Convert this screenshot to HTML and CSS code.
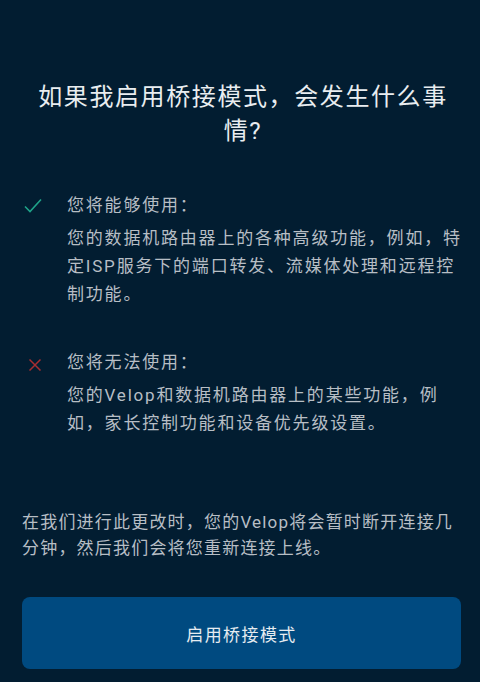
FILE: index.html
```html
<!DOCTYPE html>
<html lang="zh-CN">
<head>
<meta charset="utf-8">
<link rel="stylesheet" href="styles.css">
</head>
<body>
<main class="page">
  <h1 class="title">如果我启用桥接模式，会发生什么事情?</h1>
  <section class="item">
    <div class="icon">
      <svg width="18" height="16" viewBox="0 0 18 16"><path d="M1 8.5 L6 13.5 L17 1.5" fill="none" stroke="#1fa389" stroke-width="1.6"/></svg>
    </div>
    <div class="text">
      <div class="head">您将能够使用：</div>
      <p class="body">您的数据机路由器上的各种高级功能，例如，特定ISP服务下的端口转发、流媒体处理和远程控制功能。</p>
    </div>
  </section>
  <section class="item item-no">
    <div class="icon">
      <svg width="12" height="12" viewBox="0 0 12 12"><path d="M0.5 0.5 L11.5 11.5 M11.5 0.5 L0.5 11.5" fill="none" stroke="#a82e30" stroke-width="1.5"/></svg>
    </div>
    <div class="text">
      <div class="head">您将无法使用：</div>
      <p class="body">您的Velop和数据机路由器上的某些功能，例如，家长控制功能和设备优先级设置。</p>
    </div>
  </section>
  <p class="note">在我们进行此更改时，您的Velop将会暂时断开连接几分钟，然后我们会将您重新连接上线。</p>
  <button class="btn">启用桥接模式</button>
</main>
</body>
</html>
```
FILE: styles.css
```css
html, body {
  margin: 0;
  padding: 0;
  background: #021d31;
  height: 100%;
}
body {
  font-family: Roboto, "Noto Sans CJK SC", sans-serif;
  color: #b7bec5;
}
.page {
  padding: 80px 16px 0 22px;
  display: flex;
  flex-direction: column;
}
.title {
  margin: 0;
  font-size: 24px;
  font-weight: 400;
  line-height: 34px;
  letter-spacing: 1.6px;
  text-align: center;
  color: #e9edf0;
  padding: 0 12px;
}
.item {
  display: flex;
  margin-top: 44px;
}
.item-no {
  margin-top: 41px;
}
.icon {
  width: 45px;
  flex: none;
  display: flex;
  justify-content: flex-start;
}
.item .icon svg { margin: 6px 0 0 2px; }
.item-no .icon svg { margin: 10px 0 0 7px; }
.text {
  width: 396px;
  flex: none;
}
.head {
  font-size: 17px;
  line-height: 27px;
  letter-spacing: 1.8px;
}
.body {
  margin: 5px 0 0;
  font-size: 17px;
  line-height: 28px;
  letter-spacing: 1.8px;
}
.note {
  margin: 72px 0 0;
  font-size: 17px;
  line-height: 26px;
  letter-spacing: 1.2px;
  width: 440px;
}
.btn {
  margin-top: 36px;
  height: 72px;
  width: 439px;
  border: none;
  border-radius: 8px;
  background: #004a80;
  color: #e6ecf1;
  font-family: Roboto, "Noto Sans CJK SC", sans-serif;
  font-size: 17px;
  letter-spacing: 1.4px;
}
```
